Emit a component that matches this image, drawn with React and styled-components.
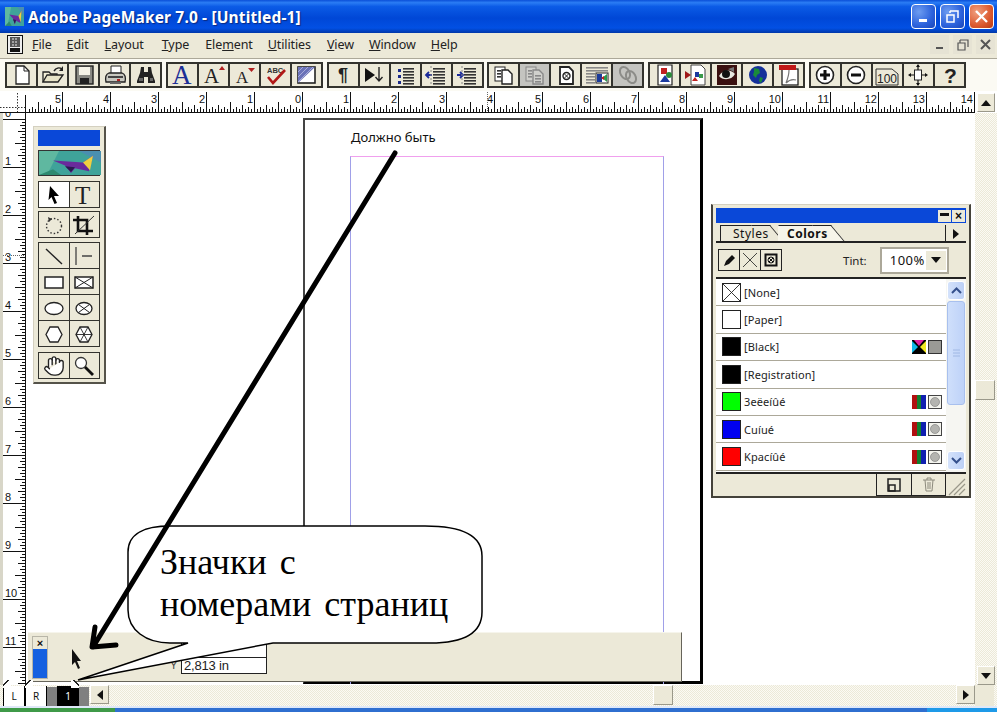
import React from 'react';
import styled, { createGlobalStyle } from 'styled-components';
import { Hand } from 'lucide-react';

const beige = '#ece9d8';
const ink = '#33332e';
const dither = `repeating-conic-gradient(${beige} 0 25%, #fbfaf4 0 50%) 0 0 / 2px 2px`;

const GlobalStyle = createGlobalStyle`
  html, body { margin: 0; padding: 0; background: #fff; }
  * { box-sizing: border-box; }
`;

const Window = styled.div`
  position: relative;
  width: 997px;
  height: 712px;
  overflow: hidden;
  display: flex;
  flex-direction: column;
  background: #fff;
  font-family: "Noto Sans", "Liberation Sans", sans-serif;
  color: #111;
`;

const TitleBar = styled.div`
  height: 33px;
  display: flex;
  align-items: center;
  padding: 0 3px 0 5px;
  background: linear-gradient(180deg, #0a4fd8 0%, #2a7cf4 8%, #0b5be6 20%, #0047d6 55%, #0250e4 85%, #0037a8 100%);
`;

const TitleText = styled.div`
  margin-left: 4px;
  flex: 1;
  color: #fff;
  font: bold 15.5px "Noto Sans", sans-serif;
  letter-spacing: 0.15px;
  text-shadow: 1px 1px 1px #0a2a80;
`;

const WinButton = styled.div`
  width: 25px;
  height: 25px;
  margin-left: 4px;
  border: 1px solid #fff;
  border-radius: 4px;
  background: ${p => (p.$close
    ? 'radial-gradient(circle at 30% 30%, #f0a080, #dc5a30 60%, #b83a14)'
    : 'radial-gradient(circle at 30% 30%, #6d9cf0, #2c62dc 60%, #1a46b8)')};
  display: flex;
  align-items: center;
  justify-content: center;
`;

const MenuBar = styled.div`
  height: 25px;
  display: flex;
  align-items: center;
  padding: 0 0 2px 7px;
  background: ${beige};
  font-size: 12.5px;
  color: #222;
`;

const MenuItem = styled.span`
  margin-left: ${p => p.$gap}px;
  letter-spacing: -0.1px;
`;

const MdiButtons = styled.div`
  margin-left: auto;
  display: flex;
  gap: 4px;
  padding-right: 2px;
`;

const MdiButton = styled.div`
  width: 19px;
  height: 19px;
  display: flex;
  align-items: center;
  justify-content: center;
  background: #e6e3d4;
`;

const ToolbarRow = styled.div`
  height: 33px;
  display: flex;
  gap: 3.8px;
  padding: 3px 0 0 5px;
  background: #fbfaf3;
  border-top: 1px solid #aca899;
`;

const ToolGroup = styled.div`
  height: 26px;
  display: flex;
  border: 2px solid ${ink};
  background: ${ink};
  gap: 2px;
`;

const ToolButton = styled.div`
  width: 29px;
  height: 22px;
  display: flex;
  align-items: center;
  justify-content: center;
  background: ${p => (p.$off ? '#c4c4c0' : beige)};
`;

const IconSvg = styled.svg`
  display: block;
  overflow: visible;
  width: ${p => p.$w || 26}px;
  height: ${p => p.$h || 22}px;
`;

const SerifMark = styled.text`
  font-family: "Liberation Serif", serif;
`;

const SansMark = styled.text`
  font-family: "Liberation Sans", sans-serif;
`;

const RulerRow = styled.div`
  height: 22px;
  display: flex;
  background: #fff;
`;

const RulerSvg = styled.svg`
  display: block;
  flex: none;
`;

const RulerMark = styled.text`
  font: 11px "Liberation Sans", sans-serif;
  fill: #111;
`;

const ScrollButton = styled.div`
  width: 18px;
  height: 19px;
  flex: none;
  margin: ${p => p.$margin || 0};
  display: flex;
  align-items: center;
  justify-content: center;
  background: ${beige};
  border-top: 1px solid #fff;
  border-left: 1px solid #fff;
  border-right: 1px solid #9a988a;
  border-bottom: 1px solid #9a988a;
`;

const WorkRow = styled.div`
  height: 572px;
  display: flex;
`;

const Canvas = styled.div`
  position: relative;
  width: 949px;
  background: #fff;
`;

const VScroll = styled.div`
  width: 22px;
  display: flex;
  flex-direction: column;
  align-items: flex-start;
  padding-left: 2px;
  background: ${dither};
`;

const ScrollThumb = styled.div`
  width: ${p => p.$w}px;
  height: ${p => p.$h}px;
  flex: none;
  margin: ${p => p.$margin};
  background: ${beige};
  border-top: 1px solid #fff;
  border-left: 1px solid #fff;
  border-right: 1px solid #9a988a;
  border-bottom: 1px solid #9a988a;
`;

const Page = styled.div`
  position: absolute;
  left: 277px;
  top: 5px;
  width: 400px;
  height: 566px;
  background: #fff;
  border-left: 2px solid #444;
  border-top: 2px solid #444;
  border-right: 3px solid #000;
  border-bottom: 3px solid #000;
`;

const PageCaption = styled.div`
  position: absolute;
  left: 46px;
  top: 8px;
  font-size: 13px;
  color: #111;
`;

const MarginGuide = styled.div`
  position: absolute;
  left: 45px;
  top: 36px;
  width: 314px;
  bottom: -3px;
  border-top: 1px solid #f0a0ee;
  border-left: 1px solid #a0a0e8;
  border-right: 1px solid #a0a0e8;
`;

const ToolPalette = styled.div`
  position: absolute;
  left: 7px;
  top: 13px;
  width: 73px;
  height: 258px;
  padding: 3px 4px;
  display: flex;
  flex-direction: column;
  background: ${beige};
  border: 1px solid #d4d0c0;
  border-right: 2px solid #55534a;
  border-bottom: 2px solid #55534a;
`;

const PaletteBlue = styled.div`
  height: 16px;
  flex: none;
  background: #0a48d8;
`;

const Thumb = styled.div`
  height: 26px;
  flex: none;
  margin: 4px 0 5px;
  border: 1px solid #333;
`;

const ToolCells = styled.div`
  display: grid;
  flex: none;
  grid-template-columns: 1fr 1fr;
  gap: 1px;
  margin-bottom: ${p => p.$after || 4}px;
  padding: 1px;
  background: ${ink};
`;

const ToolCell = styled.div`
  height: 25px;
  display: flex;
  align-items: center;
  justify-content: center;
  background: ${p => (p.$on ? '#fff' : beige)};
`;

const ControlPalette = styled.div`
  position: absolute;
  left: 2px;
  top: 519px;
  width: 654px;
  height: 50px;
  background: ${beige};
  border-top: 1px solid #f6f5ec;
  border-right: 1px solid #66645a;
  border-bottom: 1px solid #66645a;
`;

const ControlStrip = styled.div`
  position: absolute;
  left: 4px;
  top: 3px;
  width: 16px;
  height: 43px;
  background: #1560e0;
  border: 1px solid #b8b6a8;
`;

const ControlClose = styled.div`
  height: 12px;
  display: flex;
  align-items: center;
  justify-content: center;
  background: ${beige};
  font: bold 11px "Liberation Sans", sans-serif;
  line-height: 1;
`;

const ControlCursor = styled.div`
  position: absolute;
  left: 42px;
  top: 15px;
`;

const ControlField = styled.div`
  position: absolute;
  left: 153px;
  top: ${p => p.$top}px;
  width: 86px;
  height: 17px;
  padding-left: 2px;
  background: #fff;
  border: 1px solid #222;
  font: 13px/15px "Liberation Sans", sans-serif;
  letter-spacing: -0.2px;
  color: #222;
`;

const ControlLabel = styled.div`
  position: absolute;
  left: 142px;
  top: 26px;
  font: 11px "Liberation Sans", sans-serif;
  color: #444;
`;

const ColorPanel = styled.div`
  position: absolute;
  left: 685px;
  top: 91px;
  width: 260px;
  height: 294px;
  padding: 3px 3px 0;
  display: flex;
  flex-direction: column;
  background: ${beige};
  border: 1px solid #d4d0c0;
  border-left: 2px solid #44423a;
  border-right: 2px solid #44423a;
  border-bottom: 2px solid #44423a;
`;

const PanelHead = styled.div`
  height: 15px;
  flex: none;
  display: flex;
  justify-content: flex-end;
  align-items: center;
  gap: 1px;
  padding-right: 1px;
  background: #0a48d8;
`;

const PanelMini = styled.div`
  width: 13px;
  height: 12px;
  display: flex;
  align-items: center;
  justify-content: center;
  background: ${beige};
  font: bold 12px/1 "Liberation Sans", sans-serif;
`;

const TabRow = styled.div`
  height: 20px;
  flex: none;
  display: flex;
  padding: 2px 0 0 4px;
  border-bottom: 2px solid #222;
  overflow: hidden;
`;

const Tab = styled.div`
  position: relative;
  z-index: ${p => (p.$on ? 2 : 1)};
  height: 18px;
  width: ${p => p.$w}px;
  margin-left: ${p => (p.$on ? 8 : 0)}px;
  padding-left: ${p => p.$pad}px;
  background: ${p => (p.$on ? '#f7f5ea' : beige)};
  border-left: 1px solid ${p => (p.$on ? '#f7f5ea' : '#222')};
  border-top: 1px solid #222;
  font: ${p => (p.$on ? 'bold' : 'normal')} 12px/16px "Noto Sans", sans-serif;
  letter-spacing: 0.5px;
  &::after {
    content: '';
    position: absolute;
    top: -1px;
    right: 0;
    width: 18px;
    height: 18px;
    background: inherit;
    border-right: 1px solid #222;
    border-top: 1px solid #222;
    transform: skewX(40deg);
    transform-origin: top;
    z-index: -1;
  }
`;

const TabArrow = styled.div`
  margin-left: auto;
  width: 21px;
  height: 18px;
  display: flex;
  align-items: center;
  justify-content: center;
  border-left: 1px solid #222;
`;

const TintRow = styled.div`
  height: 36px;
  flex: none;
  display: flex;
  align-items: center;
  padding-left: 2px;
  border-bottom: 2px solid #222;
`;

const TintTools = styled.div`
  display: flex;
  gap: 1px;
  padding: 1px;
  background: #222;
`;

const TintTool = styled.div`
  width: 20px;
  height: 20px;
  display: flex;
  align-items: center;
  justify-content: center;
  background: ${beige};
`;

const TintLabel = styled.div`
  margin-left: 61px;
  font-size: 11.5px;
  color: #222;
`;

const TintSelect = styled.div`
  margin-left: 13px;
  width: 69px;
  height: 27px;
  padding: 2px 1px 2px 8px;
  display: flex;
  align-items: center;
  justify-content: space-between;
  background: #fff;
  border: 2px solid #aca899;
  font-size: 13px;
  letter-spacing: 0.5px;
`;

const TintArrow = styled.div`
  width: 20px;
  height: 19px;
  display: flex;
  align-items: center;
  justify-content: center;
  background: ${beige};
`;

const ListWrap = styled.div`
  flex: 1;
  min-height: 0;
  display: flex;
  background: #fff;
`;

const ColorList = styled.div`
  width: 232px;
`;

const ColorRow = styled.div`
  height: 27.4px;
  display: flex;
  align-items: center;
  padding: 0 4px 0 6px;
  border-bottom: 1px solid #aca899;
  font-size: 11px;
  letter-spacing: 0.1px;
  color: #222;
`;

const Swatch = styled.div`
  width: 19px;
  height: 19px;
  flex: none;
  margin-right: 3px;
  border: 1px solid #222;
  background: ${p => p.$color};
`;

const ModeIcons = styled.div`
  margin-left: auto;
  display: flex;
  gap: 2px;
`;

const XpScroll = styled.div`
  width: 20px;
  display: flex;
  flex-direction: column;
  padding: 2px 1px;
  background: #f6f6f2;
`;

const XpButton = styled.div`
  height: 19px;
  flex: none;
  margin-top: ${p => (p.$end ? 'auto' : 0)};
  display: flex;
  align-items: center;
  justify-content: center;
  border: 1px solid #fff;
  border-radius: 3px;
  background: linear-gradient(90deg, #d4e2fb, #bcd0f6);
`;

const XpThumb = styled.div`
  height: 104px;
  flex: none;
  margin-top: 1px;
  display: flex;
  align-items: center;
  justify-content: center;
  border: 1px solid #a8c0ee;
  border-radius: 3px;
  background: linear-gradient(90deg, #cfdffb, #bed2f8);
`;

const PanelFoot = styled.div`
  height: 24px;
  flex: none;
  display: flex;
  justify-content: flex-end;
  align-items: stretch;
  border-top: 2px solid #222;
`;

const FootButton = styled.div`
  width: 35px;
  display: flex;
  align-items: center;
  justify-content: center;
  border-left: 1px solid #222;
  border-bottom: 1px solid #222;
  border-right: ${p => (p.$last ? '1px solid #222' : 'none')};
`;

const Grip = styled.div`
  width: 20px;
`;

const BottomRow = styled.div`
  height: 21px;
  display: flex;
  background: ${dither};
`;

const PageTabs = styled.div`
  width: 90px;
  height: 25px;
  margin-top: -4px;
  padding-left: 3px;
  display: flex;
  align-items: flex-end;
  position: relative;
  z-index: 2;
`;

const PageTab = styled.div`
  position: relative;
  width: 22px;
  height: 20px;
  text-align: center;
  background: ${p => (p.$on ? '#000' : '#fff')};
  color: ${p => (p.$on ? '#fff' : '#111')};
  border-left: 1px solid #000;
  border-right: 1px solid #000;
  font: 10px/20px "Noto Sans", sans-serif;
  &::before {
    content: '';
    position: absolute;
    top: -6px;
    width: 8px;
    height: 8px;
    left: ${p => (p.$on ? 'auto' : '-1px')};
    right: ${p => (p.$on ? '-1px' : 'auto')};
    background: ${p => (p.$on
      ? 'linear-gradient(45deg, #fff 60%, #222 60%, #222 74%, transparent 74%)'
      : 'linear-gradient(-45deg, #fff 60%, #222 60%, #222 74%, transparent 74%)')};
  }
`;

const PageGap = styled.div`
  width: 10px;
  height: 19px;
  background: #808080;
`;

const HScrollButton = styled(ScrollButton)`
  width: 19px;
  height: 19px;
`;

const HSpacer = styled.div`
  flex: 1;
  position: relative;
`;

const Corner = styled.div`
  width: 19px;
  background: ${beige};
  margin-right: 3px;
`;

const TaskStrip = styled.div`
  height: 6px;
  display: flex;
  border-top: 2px solid #dfe8f8;
  background: #2f6fd0;
`;

const TaskStart = styled.div`
  width: 115px;
  background: #3f9a48;
`;

const TaskTray = styled.div`
  width: 70px;
  margin-left: auto;
  background: #1e9ae8;
`;

const Overlay = styled.svg`
  position: absolute;
  left: 0;
  top: 0;
  pointer-events: none;
  z-index: ${p => p.$z};
`;

const CalloutText = styled.div`
  position: absolute;
  left: 160px;
  top: 541px;
  z-index: 4;
  font: 36px/42px "Liberation Serif", serif;
  color: #000;
  word-spacing: 4px;
  white-space: pre;
`;

const Ico = ({ children, w = 26, h = 22, vb }) => (
  <IconSvg $w={w} $h={h} viewBox={vb || `0 0 ${w} ${h}`}>{children}</IconSvg>
);

const LogoArt = ({ w, h }) => (
  <IconSvg $w={w} $h={h} viewBox="0 0 62 25" preserveAspectRatio="none">
    <rect width="62" height="25" fill="#3fa39a" />
    <path d="M0 0h20L8 25H0z" fill="#5fb8a0" />
    <path d="M40 0h22v12z" fill="#4a8fb0" />
    <path d="M14 10l30 2 10-7-4 16-14-3-4 5-6-8z" fill="#6a2a9c" />
    <path d="M44 12l10-7-3 15z" fill="#f0d040" />
    <path d="M26 16l10 1-4 5z" fill="#2a1a50" />
    <path d="M0 25l14-6 8 6z" fill="#2e8a70" />
  </IconSvg>
);

const stroke = { fill: 'none', stroke: '#222', strokeWidth: 1.4 };

const lines = (x, y, w, n, gap, color = '#333') =>
  Array.from({ length: n }, (_, i) => (
    <rect key={i} x={x} y={y + i * gap} width={w} height="1.6" fill={color} />
  ));

const toolbarGroups = [
  [
    <Ico><path d="M7 2h8l5 5v13H7z" fill="#fff" stroke="#222" strokeWidth="1.3" /><path d="M15 2v5h5" {...stroke} strokeWidth="1" /></Ico>,
    <Ico><path d="M3 18V8h6l2 2h6v2" fill="#f4f0d8" stroke="#222" strokeWidth="1.3" /><path d="M3 18l4-7h16l-5 7z" fill="#e8e4c8" stroke="#222" strokeWidth="1.3" /><path d="M14 7c2-3 5-4 8-2" {...stroke} /><path d="M23 2v5h-4z" fill="#222" /></Ico>,
    <Ico><rect x="5" y="2" width="17" height="18" fill="#8a8a84" stroke="#222" strokeWidth="1.4" /><rect x="8" y="3" width="11" height="8" fill="#f6f4e8" /><rect x="9" y="14" width="9" height="6" fill="#222" /></Ico>,
    <Ico><path d="M9 9V2h10v7" fill="#fff" stroke="#222" /><path d="M4 18c-1-5 0-8 3-9h13c3 1 4 4 3 9z" fill="#c8c8c0" stroke="#222" strokeWidth="1.3" /><rect x="6" y="12" width="15" height="2" fill="#444" /><rect x="15" y="15" width="3" height="2" fill="#b02020" /><path d="M8 18h11v2H8z" fill="#666" /></Ico>,
    <Ico><path d="M8 3h3v5h4V3h3l1 6 3 8v2h-7v-6h-4v6H4v-2l3-8z" fill="#222" /><rect x="6" y="14" width="4" height="3" fill="#666" /><rect x="17" y="14" width="3" height="3" fill="#666" /></Ico>,
  ],
  [
    <Ico><SerifMark x="3" y="20" fontSize="27" fill="#1c2f96">A</SerifMark></Ico>,
    <Ico><SerifMark x="4" y="19" fontSize="21" fill="#222">A</SerifMark><path d="M19 6l3-4 3 4z" fill="#b02020" /></Ico>,
    <Ico><SerifMark x="5" y="19" fontSize="17" fill="#222">A</SerifMark><path d="M17 4h7l-3.500 4z" fill="#b02020" /></Ico>,
    <Ico><SansMark x="5" y="9" fontSize="7.500" fontWeight="bold" fill="#333">ABC</SansMark><path d="M6 13l5 6L23 6" fill="none" stroke="#b01818" strokeWidth="2.600" /></Ico>,
    <Ico><rect x="5" y="3" width="17" height="16" fill="#fff" stroke="#222" strokeWidth="1.6" /><path d="M5 3h17L5 19z" fill="#6a72b8" /><path d="M5 8l5-5M5 13l10-10M5 18l15-15" stroke="#a8acd8" strokeWidth="1" /></Ico>,
  ],
  [
    <Ico><SansMark x="8" y="17" fontSize="18" fontWeight="bold" fill="#222">¶</SansMark></Ico>,
    <Ico><path d="M4 4l10 7-10 7z" fill="#111" /><path d="M18 3v14M14.500 13l3.500 4 3.500-4" {...stroke} /></Ico>,
    <Ico><rect x="6" y="5" width="3" height="3" fill="#1a2a8a" /><rect x="6" y="11" width="3" height="3" fill="#1a2a8a" /><rect x="6" y="17" width="3" height="3" fill="#1a2a8a" />{lines(11, 4, 11, 6, 3)}</Ico>,
    <Ico>{lines(10, 4, 12, 6, 3)}<path d="M3 11h6M6 8l-3 3 3 3" fill="none" stroke="#1a2a9a" strokeWidth="1.800" /><path d="M8 2v19" stroke="#888" strokeDasharray="2 2" /></Ico>,
    <Ico>{lines(10, 4, 12, 6, 3)}<path d="M3 11h6M6 8l3 3-3 3" fill="none" stroke="#1a2a9a" strokeWidth="1.800" /><path d="M8 2v19" stroke="#888" strokeDasharray="2 2" /></Ico>,
  ],
  [
    <Ico><rect x="4" y="3" width="10" height="14" fill="#fff" stroke="#222" /><path d="M11 6h6l4 4v10H11z" fill="#fff" stroke="#222" strokeWidth="1.400" />{lines(6, 6, 4, 3, 3)}</Ico>,
    <Ico><rect x="4" y="3" width="10" height="14" fill="#d0d0cc" stroke="#888" /><path d="M11 6h6l4 4v10H11z" fill="#d0d0cc" stroke="#888" strokeWidth="1.400" />{lines(6, 6, 4, 3, 3, '#888')}{lines(13, 11, 6, 3, 3, '#888')}</Ico>,
    <Ico><path d="M7 3h9l4 4v13H7z" fill="#fff" stroke="#222" strokeWidth="1.800" /><circle cx="13.500" cy="12" r="3.500" {...stroke} /><path d="M11 9.500l5 5M16 9.500l-5 5" {...stroke} strokeWidth="1" /></Ico>,
    <Ico>{lines(2, 3, 22, 2, 3, '#888')}{lines(2, 9, 9, 4, 3, '#888')}<rect x="12" y="9" width="12" height="10" fill="#fff" stroke="#222" /><rect x="13" y="10" width="5" height="8" fill="#1a3a9a" /><path d="M18 14l5-4v8z" fill="#2a9a4a" /><path d="M17 14l3-2v4z" fill="#c02020" /></Ico>,
    <Ico><ellipse cx="10" cy="9" rx="4.500" ry="6.500" transform="rotate(-30 10 9)" fill="none" stroke="#8c8c88" strokeWidth="2" /><ellipse cx="16" cy="13" rx="4.500" ry="6.500" transform="rotate(-30 16 13)" fill="none" stroke="#8c8c88" strokeWidth="2" /></Ico>,
  ],
  [
    <Ico><path d="M6 1h14v20H6z" fill="#fff" stroke="#222" strokeWidth="1.200" /><rect x="9" y="4" width="6" height="6" fill="#c02020" /><circle cx="17" cy="11" r="3" fill="#2a8a3a" /><path d="M8 18l5-7 5 7z" fill="#1a3aa0" /></Ico>,
    <Ico><path d="M8 1h10l4 4v16H8z" fill="#fff" stroke="#444" /><path d="M2 7l6 4-6 4z" fill="#a01818" /><rect x="12" y="8" width="4" height="5" fill="#1a3aa0" /><rect x="16" y="10" width="4" height="4" fill="#3a9a4a" /><path d="M9 17l3-4 3 4z" fill="#c02020" /></Ico>,
    <Ico><rect x="3" y="1" width="20" height="20" fill="#3a1010" /><path d="M5 12c4-7 12-7 16-2-3 6-12 7-16 2z" fill="#e8e8e0" /><circle cx="12" cy="10" r="4" fill="#111" /><path d="M14 5l6-2v5z" fill="#777" /></Ico>,
    <Ico><circle cx="13" cy="11" r="9" fill="#14309a" /><path d="M9 4l5 1 1 4-3 2-1 3-3-3 1-3zM15 13l3 1-2 5-2-2z" fill="#1a8a3a" /></Ico>,
    <Ico><rect x="6" y="5" width="16" height="16" fill="#fff" stroke="#222" strokeWidth="1.300" /><rect x="3" y="1" width="17" height="5" fill="#c01818" /><path d="M10 19c2-5 3-9 3-13M10 19c3-3 7-4 10-3" fill="none" stroke="#777" strokeWidth="1.200" /></Ico>,
  ],
  [
    <Ico><circle cx="13" cy="11" r="8.500" fill="#fff" stroke="#222" strokeWidth="1.600" /><path d="M13 6v10M8 11h10" stroke="#111" strokeWidth="3" /></Ico>,
    <Ico><circle cx="13" cy="11" r="8.500" fill="#fff" stroke="#222" strokeWidth="1.600" /><path d="M8 11h10" stroke="#111" strokeWidth="3" /></Ico>,
    <Ico><path d="M2 5h16l6 5v11H2z" fill="none" stroke="#333" strokeWidth="1" /><SansMark x="3" y="19" fontSize="12" fill="#222">100</SansMark></Ico>,
    <Ico><rect x="9.500" y="6" width="7" height="10" fill="#fff" stroke="#222" /><path d="M13 1v5M13 16v5M5 11h4M17 11h4" stroke="#111" strokeWidth="1.200" /><path d="M11 3h4l-2-3zM11 19h4l-2 3zM6 9v4l-3-2zM20 9v4l3-2z" fill="#111" /></Ico>,
    <Ico><SansMark x="8" y="19" fontSize="21" fontWeight="bold" fill="#222">?</SansMark></Ico>,
  ],
];

const menuItems = [
  { key: 'F', rest: 'ile', gap: 9 },
  { key: 'E', rest: 'dit', gap: 15 },
  { key: 'L', rest: 'ayout', gap: 16 },
  { key: 'T', rest: 'ype', gap: 18 },
  { before: 'Ele', key: 'm', rest: 'ent', gap: 16 },
  { key: 'U', rest: 'tilities', gap: 15 },
  { key: 'V', rest: 'iew', gap: 16 },
  { key: 'W', rest: 'indow', gap: 15 },
  { key: 'H', rest: 'elp', gap: 15 },
];

const tickLength = i => {
  if (i % 16 === 0) return 20;
  if (i % 8 === 0) return 10;
  if (i % 4 === 0) return 7;
  if (i % 2 === 0) return 5;
  return 3;
};

const HRuler = () => {
  const zero = 276;
  const ticks = [];
  for (let i = -92; i <= 224; i += 1) {
    const x = zero + i * 3;
    if (x > 0 && x < 949) ticks.push(<path key={i} d={`M${x + 0.5} 21V${21 - tickLength(i)}`} stroke="#111" />);
  }
  const marks = [5, 4, 3, 2, 1, 0, 1, 2, 3, 4, 5, 6, 7, 8, 9, 10, 11, 12, 13, 14];
  return (
    <RulerSvg width="949" height="22">
      <rect y="21" width="949" height="1" fill="#111" />
      {ticks}
      {marks.map((m, i) => (
        <RulerMark key={i} x={zero + (i - 5) * 48 - 1} y="12" textAnchor="end">{m}</RulerMark>
      ))}
      <path d="M461.500 1V21" stroke="#666" strokeDasharray="1 1" />
    </RulerSvg>
  );
};

const VRuler = () => {
  const zero = 6;
  const ticks = [];
  for (let i = 0; i <= 190; i += 1) {
    const y = zero + i * 3;
    const len = i % 16 === 0 ? 22 : tickLength(i);
    ticks.push(<path key={i} d={`M25 ${y + 0.5}H${25 - len}`} stroke="#111" />);
  }
  return (
    <RulerSvg width="26" height="572">
      <rect width="3" height="572" fill="#d8d6c8" />
      <rect x="25" width="1" height="572" fill="#111" />
      {ticks}
      {Array.from({ length: 12 }, (_, i) => (
        <RulerMark key={i} x="5" y={zero + i * 48 - 2}>{i}</RulerMark>
      ))}
      <path d="M3 142.500H25" stroke="#666" strokeDasharray="1 1" />
    </RulerSvg>
  );
};

const Up = ({ color = '#111' }) => <Ico w={10} h={6}><path d="M0 6l5-6 5 6z" fill={color} /></Ico>;
const Down = ({ color = '#111' }) => <Ico w={10} h={6}><path d="M0 0l5 6 5-6z" fill={color} /></Ico>;
const Left = () => <Ico w={6} h={10}><path d="M6 0L0 5l6 5z" fill="#111" /></Ico>;
const Right = () => <Ico w={6} h={10}><path d="M0 0l6 5-6 5z" fill="#111" /></Ico>;
const XpUp = () => <Ico w={11} h={7}><path d="M1 6l4.500-4.500L10 6" fill="none" stroke="#35508c" strokeWidth="2" /></Ico>;
const XpDown = () => <Ico w={11} h={7}><path d="M1 1l4.500 4.500L10 1" fill="none" stroke="#35508c" strokeWidth="2" /></Ico>;

const cell = { w: 28, h: 24 };
const toolCells = {
  a: [
    [<Ico {...cell}><path d="M10 3l9 10h-5l3 7-2.500 1-3-7-3 3z" fill="#000" /></Ico>, true],
    [<Ico {...cell}><SerifMark x="5" y="21" fontSize="25" fill="#222">T</SerifMark></Ico>],
  ],
  b: [
    [<Ico {...cell}><circle cx="14" cy="13" r="7.500" fill="none" stroke="#333" strokeDasharray="1.500 2" strokeWidth="1.400" /><path d="M8 4l4 2-3 3z" fill="#333" /></Ico>],
    [<Ico {...cell}><path d="M8 3v15h15M3 7h14v15" fill="none" stroke="#111" strokeWidth="2.600" /><path d="M5 21L24 3" stroke="#333" /></Ico>],
  ],
  c: [
    [<Ico {...cell}><path d="M6 5l16 15" stroke="#222" strokeWidth="1.400" /></Ico>],
    [<Ico {...cell}><path d="M6 3v18M12 12h10" stroke="#444" strokeWidth="1.300" /></Ico>],
    [<Ico {...cell}><rect x="5" y="7" width="18" height="11" fill="#fff" stroke="#222" strokeWidth="1.500" /></Ico>],
    [<Ico {...cell}><rect x="5" y="7" width="18" height="11" fill="#fff" stroke="#222" strokeWidth="1.500" /><path d="M5 7l18 11M23 7L5 18" stroke="#222" /></Ico>],
    [<Ico {...cell}><ellipse cx="14" cy="12.500" rx="9" ry="6" fill="#fff" stroke="#222" strokeWidth="1.300" /></Ico>],
    [<Ico {...cell}><ellipse cx="14" cy="12.500" rx="8" ry="6" fill="#fff" stroke="#222" strokeWidth="1.300" /><path d="M8.500 8.500l11 8M19.500 8.500l-11 8" stroke="#222" /></Ico>],
    [<Ico {...cell}><path d="M10 5h8l4 7.500-4 7.500h-8l-4-7.500z" fill="#fff" stroke="#222" strokeWidth="1.300" /></Ico>],
    [<Ico {...cell}><path d="M10 5h8l4 7.500-4 7.500h-8l-4-7.500z" fill="#fff" stroke="#222" strokeWidth="1.300" /><path d="M10 5l8 15M18 5l-8 15M6 12.500h16" stroke="#222" strokeWidth="0.900" /></Ico>],
  ],
  d: [
    [<Hand size={22} strokeWidth={1.5} color="#222" fill="#fff" />],
    [<Ico {...cell}><circle cx="11" cy="9" r="5.500" fill="#fff" stroke="#333" strokeWidth="1.300" /><path d="M15 13l8 8" stroke="#111" strokeWidth="2.800" /></Ico>],
  ],
};

const ToolBlock = ({ items, after }) => (
  <ToolCells $after={after}>
    {items.map(([icon, on], i) => <ToolCell key={i} $on={on}>{icon}</ToolCell>)}
  </ToolCells>
);

const CmykIcon = () => (
  <Ico w={14} h={14}>
    <rect width="14" height="14" fill="#000" />
    <path d="M0 1l6 6-6 6z" fill="#10b8e8" />
    <path d="M2 0h10L7 6z" fill="#e020a0" />
    <path d="M14 1v12L8 7z" fill="#f0e820" />
  </Ico>
);

const GrayIcon = () => (
  <Ico w={14} h={14}><rect x=".5" y=".5" width="13" height="13" fill="#9a9a96" stroke="#333" /></Ico>
);

const RgbIcon = () => (
  <Ico w={14} h={14}>
    <rect width="5" height="14" fill="#b01010" />
    <rect x="5" width="4" height="14" fill="#108030" />
    <rect x="9" width="5" height="14" fill="#1020b0" />
  </Ico>
);

const DotIcon = () => (
  <Ico w={14} h={14}>
    <rect x=".5" y=".5" width="13" height="13" fill="#f4f4ee" stroke="#444" />
    <circle cx="7" cy="7" r="4.500" fill="#b4b4b0" stroke="#777" strokeWidth=".6" />
  </Ico>
);

const colorRows = [
  { name: '[None]', color: '#fff', none: true },
  { name: '[Paper]', color: '#fff' },
  { name: '[Black]', color: '#000', mode: 'cmyk' },
  { name: '[Registration]', color: '#000' },
  { name: '3eëeíûé', color: '#00ff00', mode: 'rgb' },
  { name: 'Cuíué', color: '#0000f0', mode: 'rgb' },
  { name: 'Kpacíûé', color: '#ff0000', mode: 'rgb' },
];

const App = () => (
  <Window>
    <GlobalStyle />
    <TitleBar>
      <LogoArt w={19} h={19} />
      <TitleText>Adobe PageMaker 7.0 - [Untitled-1]</TitleText>
      <WinButton>
        <Ico w={12} h={12}><rect x="1" y="8" width="8" height="3" fill="#fff" /></Ico>
      </WinButton>
      <WinButton>
        <Ico w={15} h={15}><path d="M5 2h8v7M5 2v2M2 6h7v7H2z" fill="none" stroke="#fff" strokeWidth="1.500" /></Ico>
      </WinButton>
      <WinButton $close>
        <Ico w={15} h={15}><path d="M2 2l11 11M13 2L2 13" stroke="#fff" strokeWidth="2.400" /></Ico>
      </WinButton>
    </TitleBar>

    <MenuBar>
      <Ico w={16} h={19}>
        <rect x=".5" y=".5" width="15" height="18" fill="#eee" stroke="#111" />
        <rect x="3" y="2" width="10" height="10" fill="#555" />
        <rect x="3" y="13" width="10" height="4" fill="#111" />
        <path d="M5 4h6M5 7h6M5 10h6" stroke="#eee" strokeDasharray="2 1" />
      </Ico>
      {menuItems.map(m => (
        <MenuItem key={m.key} $gap={m.gap}>{m.before}<u>{m.key}</u>{m.rest}</MenuItem>
      ))}
      <MdiButtons>
        <MdiButton><Ico w={10} h={10}><rect x="1" y="7" width="7" height="2" fill="#555" /></Ico></MdiButton>
        <MdiButton><Ico w={12} h={12}><path d="M3 1h8v7M3 1v3M1 4h7v7H1z" fill="none" stroke="#555" strokeWidth="1.200" /></Ico></MdiButton>
        <MdiButton><Ico w={11} h={11}><path d="M1 1l9 9M10 1l-9 9" stroke="#555" strokeWidth="2" /></Ico></MdiButton>
      </MdiButtons>
    </MenuBar>

    <ToolbarRow>
      {toolbarGroups.map((group, g) => (
        <ToolGroup key={g}>
          {group.map((icon, i) => (
            <ToolButton key={i} $off={(g === 3 && (i === 1 || i === 4))}>{icon}</ToolButton>
          ))}
        </ToolGroup>
      ))}
    </ToolbarRow>

    <RulerRow>
      <RulerSvg width="26" height="22">
        <path d="M0 16.500H26" stroke="#333" strokeDasharray="1.500 1.500" />
        <path d="M17.500 2V22" stroke="#333" strokeDasharray="1.500 1.500" />
        <rect y="21" width="26" height="1" fill="#111" />
        <rect x="25" y="4" width="1" height="18" fill="#111" />
      </RulerSvg>
      <HRuler />
      <ScrollButton $margin="2px 0 0 2px"><Up /></ScrollButton>
    </RulerRow>

    <WorkRow>
      <VRuler />
      <Canvas>
        <Page>
          <PageCaption>Должно быть</PageCaption>
          <MarginGuide />
        </Page>

        <ToolPalette>
          <PaletteBlue />
          <Thumb><LogoArt w={62} h={24} /></Thumb>
          <ToolBlock items={toolCells.a} after={3} />
          <ToolBlock items={toolCells.b} />
          <ToolBlock items={toolCells.c} after={5} />
          <ToolBlock items={toolCells.d} />
        </ToolPalette>

        <ColorPanel>
          <PanelHead>
            <PanelMini><Ico w={9} h={9}><rect y="2" width="9" height="3" fill="#111" /></Ico></PanelMini>
            <PanelMini>×</PanelMini>
          </PanelHead>
          <TabRow>
            <Tab $w={50} $pad={12}>Styles</Tab>
            <Tab $on $w={53} $pad={8}>Colors</Tab>
            <TabArrow><Right /></TabArrow>
          </TabRow>
          <TintRow>
            <TintTools>
              <TintTool><Ico w={14} h={14}><path d="M2 13l2-5 6-6 3 3-6 6z" fill="#111" /></Ico></TintTool>
              <TintTool><Ico w={16} h={16}><path d="M1 1l14 14M15 1L1 15" stroke="#333" strokeWidth=".9" /></Ico></TintTool>
              <TintTool><Ico w={14} h={14}><rect x="1.500" y="1.500" width="11" height="11" fill="none" stroke="#111" strokeWidth="2" /><circle cx="7" cy="7" r="3" fill="none" stroke="#111" /><path d="M5 5l4 4M9 5l-4 4" stroke="#111" /></Ico></TintTool>
            </TintTools>
            <TintLabel>Tint:</TintLabel>
            <TintSelect>100%<TintArrow><Down /></TintArrow></TintSelect>
          </TintRow>
          <ListWrap>
            <ColorList>
              {colorRows.map(r => (
                <ColorRow key={r.name}>
                  <Swatch $color={r.color}>
                    {r.none && (
                      <Ico w={17} h={17}><path d="M0 0l17 17M17 0L0 17" stroke="#222" strokeWidth=".9" /></Ico>
                    )}
                  </Swatch>
                  {r.name}
                  {r.mode && (
                    <ModeIcons>
                      {r.mode === 'cmyk' ? <CmykIcon /> : <RgbIcon />}
                      {r.mode === 'cmyk' ? <GrayIcon /> : <DotIcon />}
                    </ModeIcons>
                  )}
                </ColorRow>
              ))}
            </ColorList>
            <XpScroll>
              <XpButton><XpUp /></XpButton>
              <XpThumb>
                <Ico w={9} h={8}><path d="M1 1h7M1 4h7M1 7h7" stroke="#a0b8e4" /></Ico>
              </XpThumb>
              <XpButton $end><XpDown /></XpButton>
            </XpScroll>
          </ListWrap>
          <PanelFoot>
            <FootButton>
              <Ico w={14} h={14}><rect x="1" y="1" width="12" height="12" fill="none" stroke="#222" strokeWidth="1.500" /><rect x="2" y="7" width="6" height="6" fill="none" stroke="#222" strokeWidth="1.500" /></Ico>
            </FootButton>
            <FootButton $last>
              <Ico w={14} h={15}><path d="M1 3h12M5 3V1h4v2M3 3l1 11h6l1-11M6 5v7M8 5v7" fill="none" stroke="#8c8a7c" /></Ico>
            </FootButton>
            <Grip>
              <Ico w={20} h={22}><path d="M19 5L3 21M19 10L8 21M19 15l-6 6" stroke="#9a988a" strokeWidth="1.200" /></Ico>
            </Grip>
          </PanelFoot>
        </ColorPanel>

        <ControlPalette>
          <ControlStrip>
            <ControlClose>×</ControlClose>
          </ControlStrip>
          <ControlCursor>
            <Ico w={14} h={22}><path d="M2 1l9 12H7l3 7-2 1-3-7-3 3z" fill="#111" /></Ico>
          </ControlCursor>
          <ControlField $top={8} />
          <ControlLabel>Y</ControlLabel>
          <ControlField $top={24}>2,813 in</ControlField>
        </ControlPalette>
      </Canvas>
      <VScroll>
        <ScrollThumb $w={20} $h={20} $margin="267px 0 0 -2px" />
        <ScrollButton $margin="auto 0 0 0"><Down /></ScrollButton>
      </VScroll>
    </WorkRow>

    <BottomRow>
      <PageTabs>
        <PageTab>L</PageTab>
        <PageTab>R</PageTab>
        <PageGap />
        <PageTab $on>1</PageTab>
        <PageGap />
      </PageTabs>
      <HScrollButton><Left /></HScrollButton>
      <HSpacer>
        <ScrollThumb $w={20} $h={20} $margin="0 0 0 544px" />
      </HSpacer>
      <HScrollButton><Right /></HScrollButton>
      <Corner />
    </BottomRow>

    <TaskStrip>
      <TaskStart />
      <TaskTray />
    </TaskStrip>

    <Overlay $z={3} width="997" height="712" viewBox="0 0 997 712">
      <path
        d="M128 552C128 533 146 526 170 526H425C462 526 482 536 482 556V612C482 634 462 643 430 643H273L78 680L188 643H170C146 643 128 630 128 610Z"
        fill="#fff"
        stroke="#000"
        strokeWidth="1.500"
      />
    </Overlay>
    <CalloutText>{'Значки с\nномерами страниц'}</CalloutText>
    <Overlay $z={5} width="997" height="712" viewBox="0 0 997 712">
      <path
        d="M395 153L93 647M95 627L92 647L116 645"
        fill="none"
        stroke="#000"
        strokeWidth="5"
        strokeLinecap="round"
        strokeLinejoin="round"
      />
    </Overlay>
  </Window>
);

export default App;
